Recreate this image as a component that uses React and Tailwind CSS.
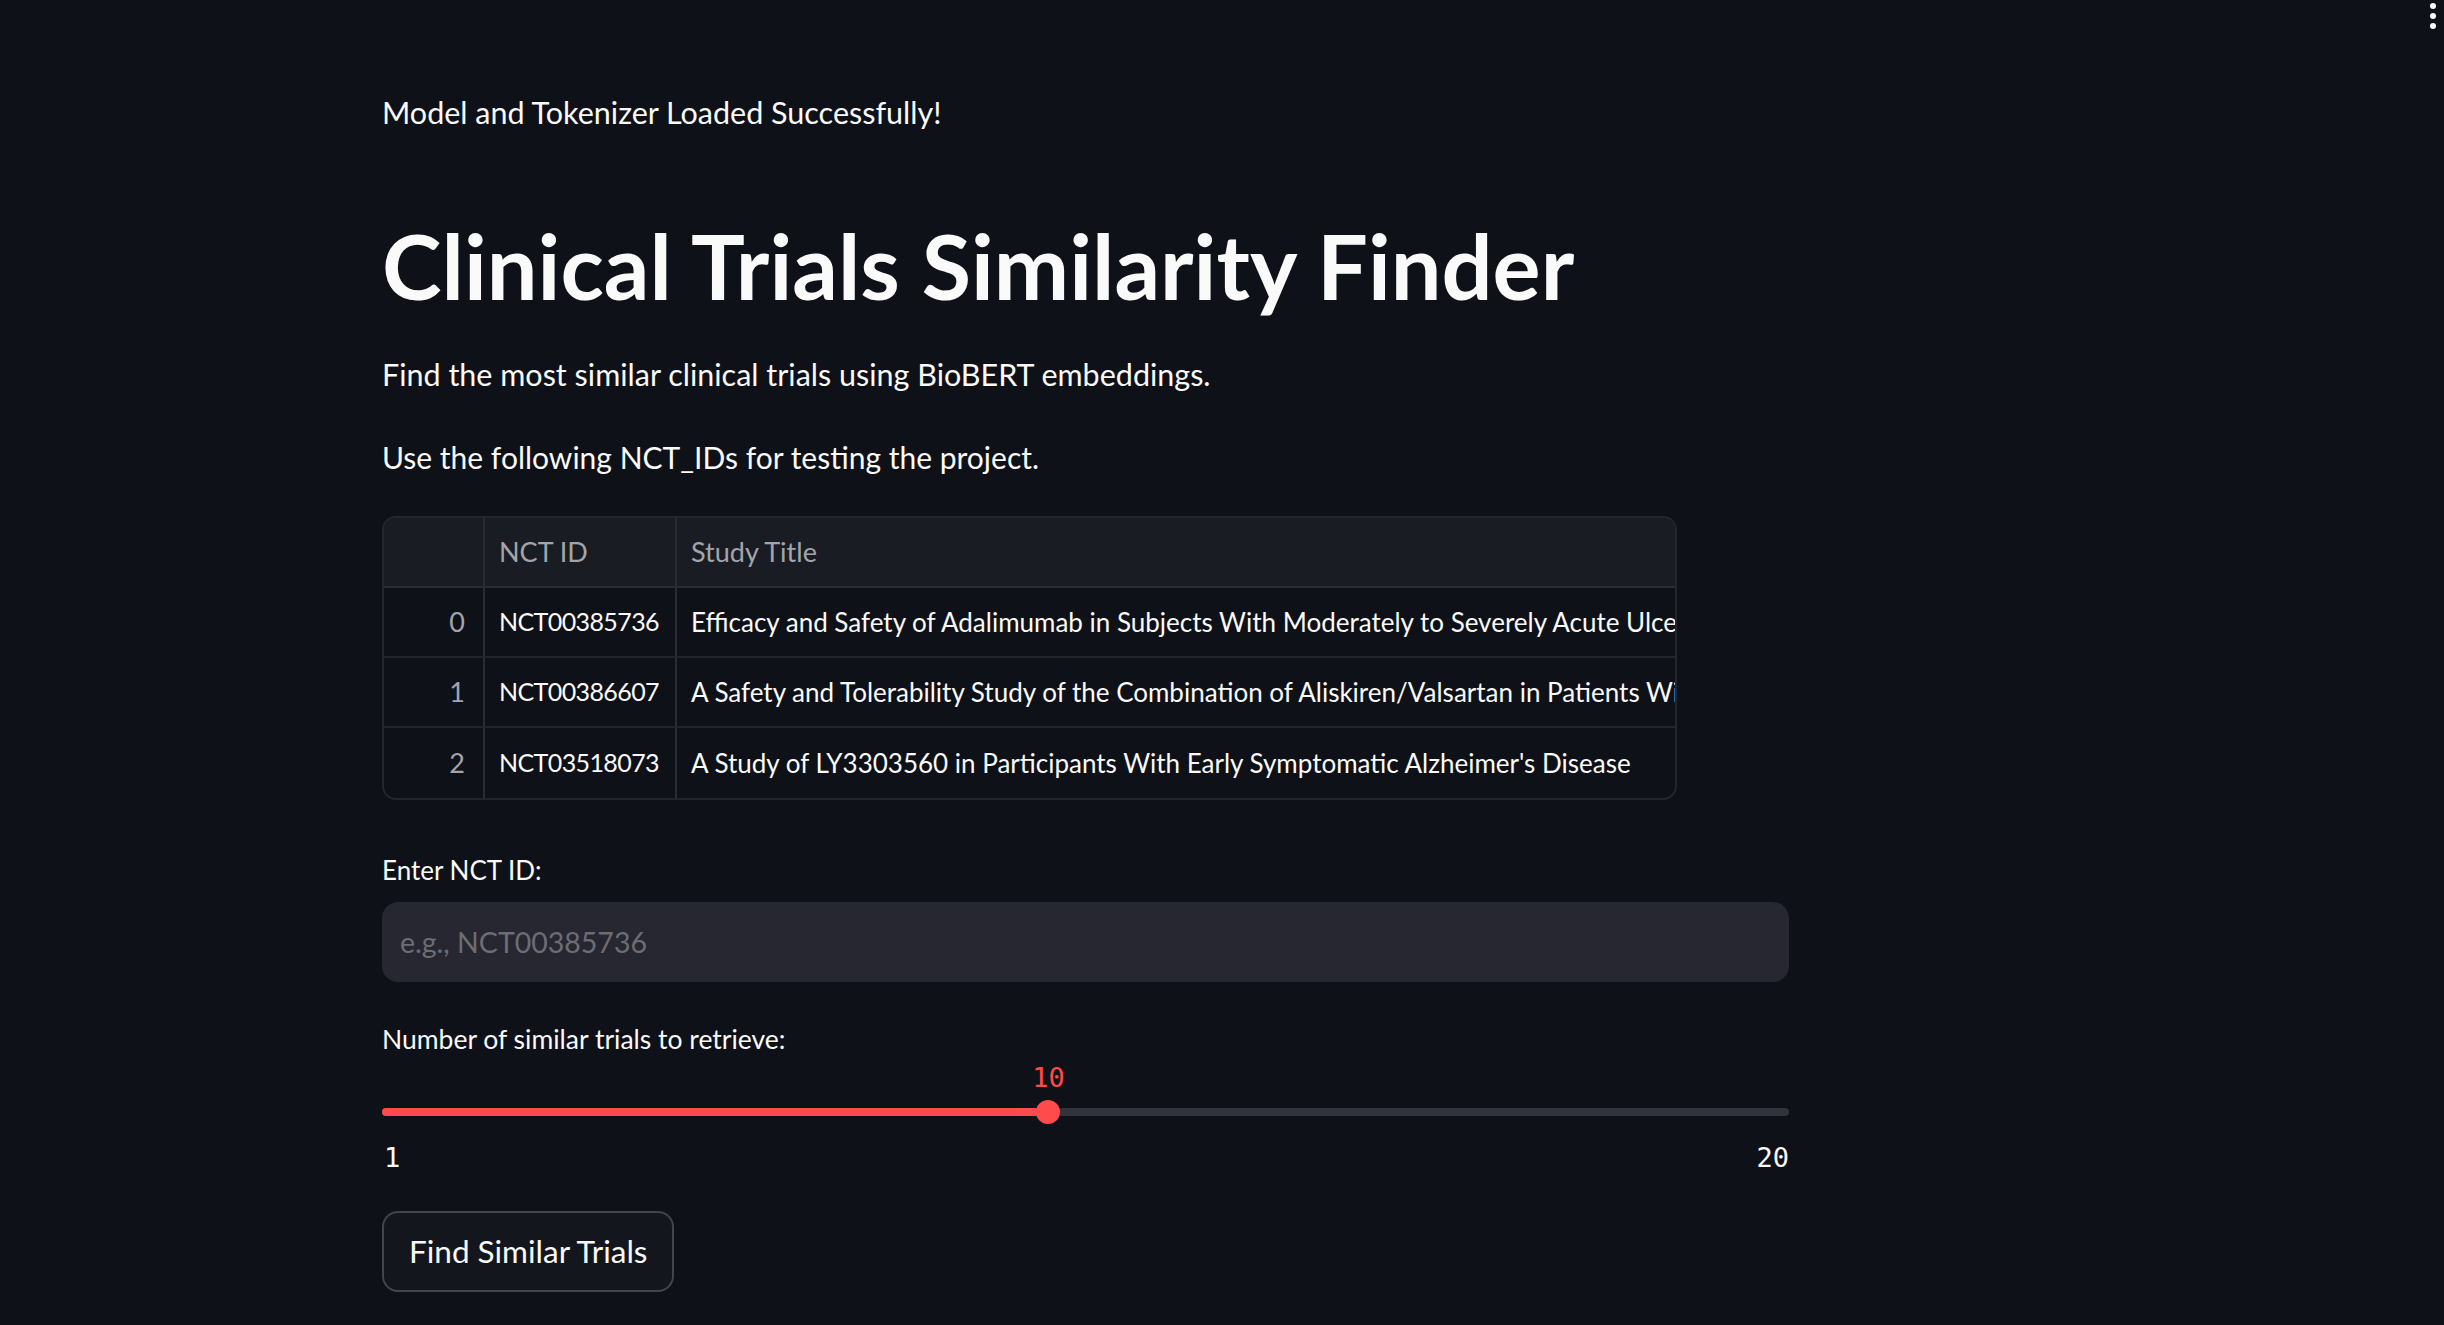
import React from 'react';

const rows = [
    { idx: 0, id: 'NCT00385736', title: 'Efficacy and Safety of Adalimumab in Subjects With Moderately to Severely Acute Ulcerative Colitis' },
    { idx: 1, id: 'NCT00386607', title: 'A Safety and Tolerability Study of the Combination of Aliskiren/Valsartan in Patients With Hypertension' },
    { idx: 2, id: 'NCT03518073', title: "A Study of LY3303560 in Participants With Early Symptomatic Alzheimer's Disease" },
];

const sans = { fontFamily: 'Lato, "Noto Sans", sans-serif' };

function DataTable() {
    return (
        <div className="mt-[33px] w-[1295px] rounded-[14px] border-2 border-[#24262d] overflow-hidden bg-[#0e1117]">
            <div className="grid grid-cols-[101px_192px_1fr] h-[70px] bg-[#1a1c23] border-b-2 border-[#2a2c33] text-[27px] text-[#a3a5ab]">
                <div className="border-r-2 border-[#2a2c33]" />
                <div className="border-r-2 border-[#2a2c33] px-[14px] flex items-center">NCT ID</div>
                <div className="px-[14px] flex items-center">Study Title</div>
            </div>
            {rows.map((row, i) => (
                <div key={row.idx} className={`grid grid-cols-[101px_192px_1fr] h-[70px] text-[26px] ${i < rows.length - 1 ? 'border-b-2 border-[#24262d]' : ''}`}>
                    <div className="border-r-2 border-[#2a2c33] px-[18px] flex items-center justify-end text-[#a3a5ab] text-[27px]">{row.idx}</div>
                    <div className="border-r-2 border-[#2a2c33] px-[14px] flex items-center text-[#fafafa] text-[25px] tracking-[-0.6px] whitespace-nowrap overflow-hidden">{row.id}</div>
                    <div className="px-[14px] flex items-center text-[#fafafa] whitespace-nowrap overflow-hidden">{row.title}</div>
                </div>
            ))}
        </div>
    );
}

function Slider() {
    const pct = ((10 - 1) / 19) * 100;
    return (
        <div style={{ fontFamily: '"DejaVu Sans Mono", "Liberation Mono", monospace' }}>
            <div className="relative h-[34px]">
                <span className="absolute top-0 -translate-x-1/2 leading-[34px] text-[27px] text-[#ff4b4b]" style={{ left: `${pct}%` }}>10</span>
            </div>
            <div className="relative mt-[5px] h-[24px] flex items-center">
                <div className="w-full h-[8px] rounded-full bg-[#31333c]" />
                <div className="absolute left-0 h-[8px] rounded-full bg-[#ff4b4b]" style={{ width: `${pct}%` }} />
                <div className="absolute w-[24px] h-[24px] rounded-full bg-[#ff4b4b] -translate-x-1/2" style={{ left: `${pct}%` }} />
            </div>
            <div className="mt-[17px] flex justify-between leading-[34px] text-[27px] text-[#fafafa]">
                <span className="pl-[2px]">1</span>
                <span>20</span>
            </div>
        </div>
    );
}

export default function App() {
    return (
        <div className="relative min-h-[1325px] bg-[#0e1117] text-[#fafafa] overflow-hidden" style={sans}>
            <div className="absolute top-[3px] right-[8px] flex flex-col gap-[4px]">
                <span className="w-[6px] h-[6px] rounded-full bg-[#fafafa]" />
                <span className="w-[6px] h-[6px] rounded-full bg-[#fafafa]" />
                <span className="w-[6px] h-[6px] rounded-full bg-[#fafafa]" />
            </div>
            <main className="ml-[382px] w-[1407px] pt-[86px]">
                <p className="text-[30.5px] leading-[52px]">Model and Tokenizer Loaded Successfully!</p>
                <h1 className="mt-[74px] text-[90px] leading-[106px] font-bold">Clinical Trials Similarity Finder</h1>
                <p className="mt-[30px] text-[30.5px] leading-[52px]">Find the most similar clinical trials using BioBERT embeddings.</p>
                <p className="mt-[31px] text-[30px] leading-[52px]">Use the following NCT_IDs for testing the project.</p>
                <DataTable />
                <label className="block mt-[48px] text-[26px] leading-[44px]">Enter NCT ID:</label>
                <div className="mt-[10px] h-[80px] rounded-[16px] bg-[#262730] flex items-center px-[18px]">
                    <input
                        className="w-full bg-transparent outline-none text-[28.5px] text-[#fafafa] placeholder:text-[#6c6d74]"
                        placeholder="e.g., NCT00385736"
                        style={sans}
                    />
                </div>
                <label className="block mt-[35px] text-[26.5px] leading-[44px]">Number of similar trials to retrieve:</label>
                <Slider />
                <button className="mt-[36px] h-[81px] px-[25px] rounded-[16px] border-2 border-[#43454c] bg-[#13161d] text-[31.5px] text-[#fafafa]" style={sans}>
                    Find Similar Trials
                </button>
            </main>
        </div>
    );
}
